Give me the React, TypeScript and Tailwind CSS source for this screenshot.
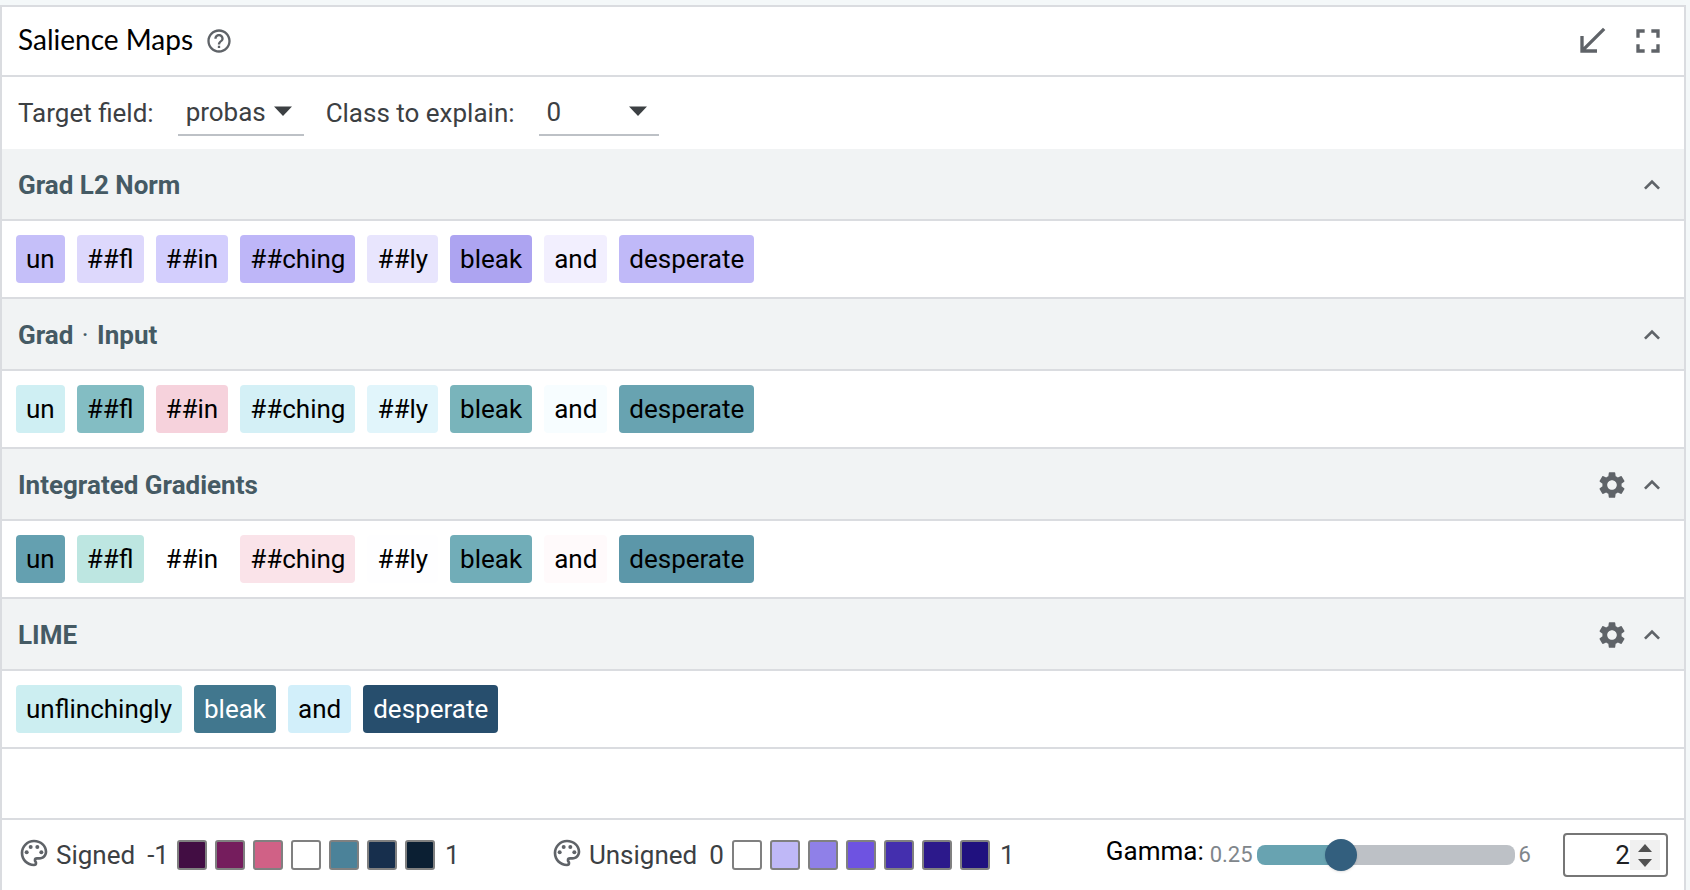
import { useState, type ReactNode } from "react";
import {
  MdCallReceived,
  MdExpandLess,
  MdFullscreen,
  MdHelpOutline,
  MdOutlinePalette,
  MdSettings,
} from "react-icons/md";

type Token = { text: string; color: string; light?: boolean };
type Method = { name: string; title?: ReactNode; configurable?: boolean; tokens: Token[] };

const PIECES = ["un", "##fl", "##in", "##ching", "##ly", "bleak", "and", "desperate"];

const paint = (colors: string[]): Token[] =>
  PIECES.map((text, i) => ({ text, color: colors[i] }));

const METHODS: Method[] = [
  {
    name: "Grad L2 Norm",
    tokens: paint(["#c5bff9", "#ddd8fc", "#d3cefd", "#beb6f8", "#e8e5fd", "#ada4f1", "#f2effe", "#c0b9f8"]),
  },
  {
    name: "Grad · Input",
    title: (
      <>
        Grad <span className="mx-0.5 font-normal">·</span> Input
      </>
    ),
    tokens: paint(["#cfeff3", "#83bdc3", "#f6d2dc", "#d4f0f6", "#e1f5fb", "#79b4bb", "#f7fdff", "#68a3b1"]),
  },
  {
    name: "Integrated Gradients",
    configurable: true,
    tokens: paint(["#64a0b0", "#bde6e1", "#ffffff", "#fae3e9", "#fefeff", "#71adb8", "#fffafb", "#5c97a9"]),
  },
  {
    name: "LIME",
    configurable: true,
    tokens: [
      { text: "unflinchingly", color: "#cceef1" },
      { text: "bleak", color: "#41778e", light: true },
      { text: "and", color: "#d2effa" },
      { text: "desperate", color: "#274e6d", light: true },
    ],
  },
];

const SIGNED = ["#420d43", "#751d5d", "#d06186", "#ffffff", "#4b8299", "#172f4d", "#0b1f33"];
const UNSIGNED = ["#ffffff", "#bfb8f7", "#8f80e8", "#6e53e1", "#442fae", "#2c198b", "#20117f"];

function Field({ id, label, options, width }: { id: string; label: string; options: string[]; width: string }) {
  return (
    <div className="flex items-center gap-6">
      <label htmlFor={id}>{label}</label>
      <div className="relative">
        <select
          id={id}
          className={`block h-[46px] appearance-none border-b-2 border-[#bdc1c6] bg-transparent pl-2 outline-none ${width}`}
        >
          {options.map((o) => (
            <option key={o}>{o}</option>
          ))}
        </select>
        <svg viewBox="0 0 18 10" className="pointer-events-none absolute top-4 right-3 h-[10px] w-[18px] fill-[#3c4043]">
          <path d="M0 0.5h18L9 10z" />
        </svg>
      </div>
    </div>
  );
}

function MethodSection({ method }: { method: Method }) {
  const [open, setOpen] = useState(true);
  return (
    <section>
      <div className="flex h-18 items-center justify-between border-b-2 border-[#dadce0] bg-[#f1f3f4] px-4 pt-0.5">
        <h2 className="font-bold text-[#455a64]">{method.title ?? method.name}</h2>
        <div className="flex items-center gap-2 text-[#5f6368]">
          {method.configurable && (
            <button aria-label={`${method.name} settings`}>
              <MdSettings size={32} />
            </button>
          )}
          <button aria-label={`Toggle ${method.name}`} aria-expanded={open} onClick={() => setOpen(!open)}>
            <MdExpandLess size={32} />
          </button>
        </div>
      </div>
      {open && (
        <div className="flex flex-wrap gap-3 border-b-2 border-[#dadce0] p-[14px]">
          {method.tokens.map((t) => (
            <span
              key={t.text}
              className={`flex h-12 items-center rounded px-[10px] ${t.light ? "text-white" : "text-black"}`}
              style={{ backgroundColor: t.color }}
            >
              {t.text}
            </span>
          ))}
        </div>
      )}
    </section>
  );
}

function Legend({ name, low, high, colors }: { name: string; low: string; high: string; colors: string[] }) {
  return (
    <div className="flex items-center text-[#3c4043]">
      <MdOutlinePalette size={32} className="mb-1 text-[#5f6368]" />
      <span className="ml-1.5">{name}</span>
      <span className="mr-2 ml-3">{low}</span>
      <div className="flex gap-2">
        {colors.map((c) => (
          <span key={c} className="size-[30px] rounded-[3px] border-2 border-[#808080]" style={{ backgroundColor: c }} />
        ))}
      </div>
      <span className="ml-2.5">{high}</span>
    </div>
  );
}

function Gamma() {
  const [value, setValue] = useState(2);
  const min = 0.25;
  const max = 6;
  const change = (v: number) => setValue(Math.min(max, Math.max(min, v)));
  const filled = ((value - min) / (max - min)) * 100;
  return (
    <div className="flex items-center">
      <label htmlFor="gamma" className="mb-2 text-black">Gamma:</label>
      <span className="ml-1.5 text-[22px] text-[#80868b]">0.25</span>
      <input
        id="gamma"
        type="range"
        min={min}
        max={max}
        step={0.25}
        value={value}
        onChange={(e) => change(Number(e.target.value))}
        style={{ backgroundImage: `linear-gradient(to right, #68a3b1 ${filled}%, #bdc1c6 ${filled}%)` }}
        className="ml-1 h-5 w-[258px] appearance-none rounded-lg [&::-webkit-slider-thumb]:size-8 [&::-webkit-slider-thumb]:appearance-none [&::-webkit-slider-thumb]:rounded-full [&::-webkit-slider-thumb]:bg-[#335f7e] [&::-webkit-slider-thumb]:shadow"
      />
      <span className="ml-1 text-[22px] text-[#80868b]">6</span>
      <div className="relative ml-8">
        <input
          type="number"
          aria-label="Gamma value"
          value={value}
          onChange={(e) => change(Number(e.target.value))}
          className="block h-11 w-[105px] appearance-none rounded border-2 border-[#767676] bg-white pr-9 text-right text-[#202124] [appearance:textfield] [&::-webkit-inner-spin-button]:hidden"
        />
        <div className="absolute top-[7px] right-2 flex h-[30px] w-[30px] flex-col bg-[#f0f0f0]">
          <button aria-label="Increase gamma" className="flex flex-1 items-center justify-center" onClick={() => change(value + 0.25)}>
            <svg viewBox="0 0 14 8" className="h-2 w-[14px] fill-[#505050]"><path d="M7 0l7 8H0z" /></svg>
          </button>
          <button aria-label="Decrease gamma" className="flex flex-1 items-center justify-center" onClick={() => change(value - 0.25)}>
            <svg viewBox="0 0 14 8" className="h-2 w-[14px] fill-[#505050]"><path d="M0 0h14L7 8z" /></svg>
          </button>
        </div>
      </div>
    </div>
  );
}

export default function App() {
  return (
    <div className="flex min-h-screen flex-col bg-[#f4f8f9] pt-[5px] pr-1 font-[Roboto,sans-serif] text-[26px] leading-8">
      <main className="flex flex-1 flex-col border-2 border-b-0 border-[#dadce0] bg-white">
        <header className="flex h-[70px] items-center justify-between border-b-2 border-[#dadce0] px-4">
          <div className="flex items-center gap-3">
            <h1 className="mb-1 font-[Lato,sans-serif] text-[28px] text-black">Salience Maps</h1>
            <button aria-label="Help" className="text-[#5f6368]">
              <MdHelpOutline size={28} />
            </button>
          </div>
          <div className="flex items-center gap-4 text-[#5f6368]">
            <button aria-label="Minimize"><MdCallReceived size={40} /></button>
            <button aria-label="Full screen"><MdFullscreen size={40} /></button>
          </div>
        </header>
        <div className="flex h-18 items-center gap-[22px] px-4 text-[#3c4043]">
          <Field id="target" label="Target field:" options={["probas"]} width="w-[126px]" />
          <Field id="class" label="Class to explain:" options={["0", "1"]} width="w-[120px]" />
        </div>
        {METHODS.map((m) => (
          <MethodSection key={m.name} method={m} />
        ))}
        <div className="min-h-[69px] flex-1" />
        <footer className="flex h-[72px] items-center justify-between border-t-2 border-[#dadce0] px-4">
          <Legend name="Signed" low="-1" high="1" colors={SIGNED} />
          <Legend name="Unsigned" low="0" high="1" colors={UNSIGNED} />
          <Gamma />
        </footer>
      </main>
    </div>
  );
}
